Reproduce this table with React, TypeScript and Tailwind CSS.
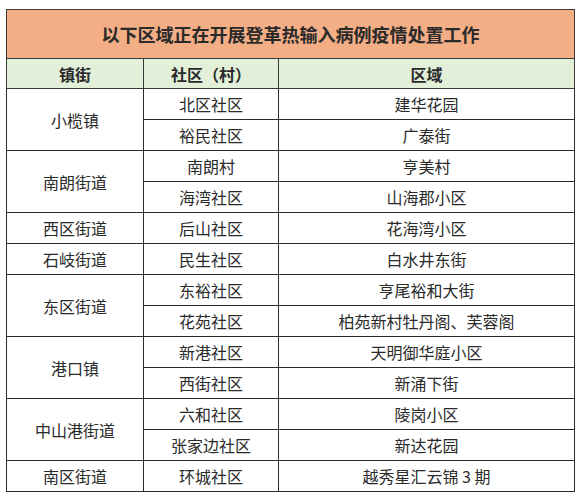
import React from "react";

type Row = { town?: string; span?: number; comm: string; area: string };

const rows: Row[] = [
  { town: "小榄镇", span: 2, comm: "北区社区", area: "建华花园" },
  { comm: "裕民社区", area: "广泰街" },
  { town: "南朗街道", span: 2, comm: "南朗村", area: "亨美村" },
  { comm: "海湾社区", area: "山海郡小区" },
  { town: "西区街道", span: 1, comm: "后山社区", area: "花海湾小区" },
  { town: "石岐街道", span: 1, comm: "民生社区", area: "白水井东街" },
  { town: "东区街道", span: 2, comm: "东裕社区", area: "亨尾裕和大街" },
  { comm: "花苑社区", area: "柏苑新村牡丹阁、芙蓉阁" },
  { town: "港口镇", span: 2, comm: "新港社区", area: "天明御华庭小区" },
  { comm: "西街社区", area: "新涌下街" },
  { town: "中山港街道", span: 2, comm: "六和社区", area: "陵岗小区" },
  { comm: "张家边社区", area: "新达花园" },
  { town: "南区街道", span: 1, comm: "环城社区", area: "越秀星汇云锦 3 期" },
];

export default function App() {
  return (
    <div
      className="w-[583px] h-[500px] bg-white pt-[9px] pl-[6px]"
      style={{ fontFamily: '"Noto Sans CJK SC", "Noto Sans", sans-serif' }}
    >
      <table className="border-collapse w-[568px] table-fixed text-[#2a2a2a]">
        <colgroup>
          <col className="w-[137px]" />
          <col className="w-[135px]" />
          <col className="w-[296px]" />
        </colgroup>
        <tbody>
          <tr className="h-[49px]">
            <td
              colSpan={3}
              className="bg-[#f4ae85] border border-[#3a3a3a] text-center font-bold text-[18px] leading-none p-0"
            >
              以下区域正在开展登革热输入病例疫情处置工作
            </td>
          </tr>
          <tr className="h-[30px] bg-[#e2efd9] font-bold text-[16px] leading-none">
            <td className="border border-[#3a3a3a] text-center p-0">镇街</td>
            <td className="border border-[#3a3a3a] text-center p-0">社区（村）</td>
            <td className="border border-[#3a3a3a] text-center p-0">区域</td>
          </tr>
          {rows.map((r, i) => (
            <tr key={i} className="h-[31px] text-[16px] leading-none">
              {r.town && (
                <td
                  rowSpan={r.span}
                  className="border border-[#2a2a2a] text-center p-0"
                >
                  {r.town}
                </td>
              )}
              <td className="border border-[#2a2a2a] text-center p-0">{r.comm}</td>
              <td className="border border-[#2a2a2a] text-center p-0">{r.area}</td>
            </tr>
          ))}
        </tbody>
      </table>
    </div>
  );
}
